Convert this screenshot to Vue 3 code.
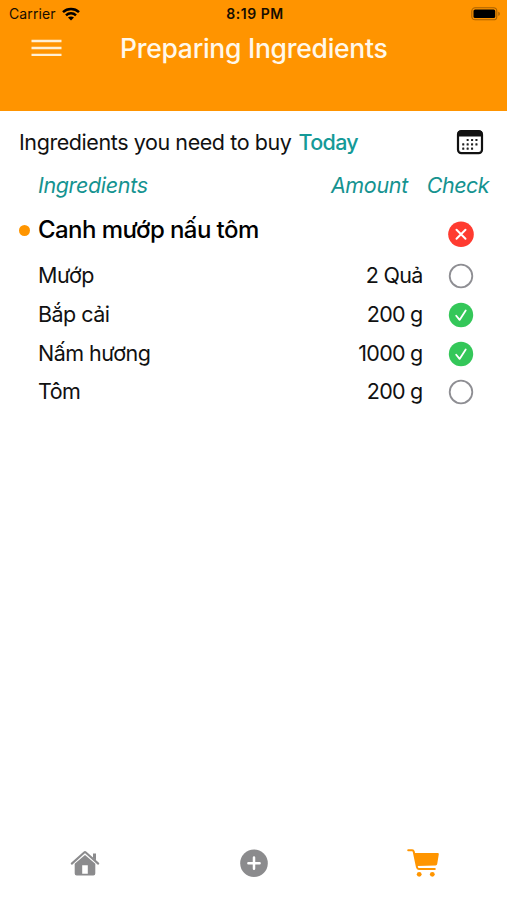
<script setup>
const ingredients = [
  { name: 'Mướp', amount: '2 Quả', checked: false },
  { name: 'Bắp cải', amount: '200 g', checked: true },
  { name: 'Nấm hương', amount: '1000 g', checked: true },
  { name: 'Tôm', amount: '200 g', checked: false },
]
const calendarDots = [
  [11.4, 11], [15.8, 11], [20.2, 11],
  [7, 15.3], [11.4, 15.3], [15.8, 15.3], [20.2, 15.3],
  [7, 19.6], [11.4, 19.6], [15.8, 19.6],
]
</script>

<template>
  <div class="screen">
    <header class="header">
      <div class="status">
        <div class="carrier">
          <span class="carrier-name">Carrier</span>
          <svg class="wifi" width="18" height="14" viewBox="0 0 18 14">
            <g fill="none" stroke="#000" stroke-width="2.5">
              <path d="M1 5.1C5.4.9 12.6.9 17 5.1" />
              <path d="M4 8.3c2.8-2.6 7.2-2.6 10 0" />
            </g>
            <path d="M9 13.4 6 10.5c1.7-1.5 4.3-1.5 6 0z" />
          </svg>
        </div>
        <span class="time">8:19 PM</span>
        <svg class="battery" width="30" height="14" viewBox="0 0 30 14">
          <rect x=".8" y=".8" width="25" height="12" rx="3.4" fill="none" stroke="#a96203" stroke-width="1.1" />
          <rect x="2.5" y="2.5" width="21.7" height="8.6" rx="1.6" />
          <path d="M27.3 4.8c2 .6 2 3.6 0 4.2z" fill="#a96203" />
        </svg>
      </div>
      <div class="navbar">
        <svg class="menu" width="31" height="18" viewBox="0 0 31 18">
          <path d="M.5 2h30M.5 9h30M.5 15.8h30" stroke="#fff0d5" stroke-width="2.3" />
        </svg>
        <h1 class="title">Preparing Ingredients</h1>
      </div>
    </header>

    <main class="content">
      <div class="intro">
        <p class="prompt">Ingredients you need to buy</p>
        <span class="today">Today</span>
        <svg class="calendar" width="28" height="26" viewBox="0 0 28 26">
          <rect x="2" y="2" width="24" height="22.2" rx="3.4" fill="#fff" stroke="#111" stroke-width="2.2" />
          <path d="M1.5 7.5V4.3Q1.5 1.5 4.7 1.5h18.6q3.2 0 3.2 2.8v3.2z" fill="#111" />
          <rect v-for="([x, y], i) in calendarDots" :key="i" :x="x - .8" :y="y - 1" width="2.1" height="2.1" rx=".5" fill="#222" />
        </svg>
      </div>

      <div class="columns">
        <span class="col-name">Ingredients</span>
        <span class="col-amount">Amount</span>
        <span class="col-check">Check</span>
      </div>

      <div class="dish">
        <i class="bullet"></i>
        <h2 class="dish-name">Canh mướp nấu tôm</h2>
        <svg class="remove" width="26" height="26" viewBox="0 0 26 26">
          <circle cx="13" cy="13.3" r="12.8" fill="#ff3b30" />
          <path d="m8.5 8.8 9 9m0-9-9 9" stroke="#fff" stroke-width="2" stroke-linecap="round" />
        </svg>
      </div>

      <ul class="list">
        <li v-for="item in ingredients" :key="item.name" class="row">
          <span class="name">{{ item.name }}</span>
          <span class="amount">{{ item.amount }}</span>
          <svg class="check" width="26" height="26" viewBox="0 0 26 26">
            <template v-if="item.checked">
              <circle cx="13" cy="13" r="12.2" fill="#34c759" />
              <path d="m8.2 13.7 3.4 4.2 6.1-9.4" fill="none" stroke="#fff" stroke-width="1.8" stroke-linecap="round" stroke-linejoin="round" />
            </template>
            <circle v-else cx="13" cy="13" r="11.3" fill="none" stroke="#8e8e93" stroke-width="1.8" />
          </svg>
        </li>
      </ul>
    </main>

    <nav class="tabs">
      <div class="tab">
        <svg width="30" height="28" viewBox="0 0 30 28">
          <path d="M1.8 14.6 14.2 3.5q.8-.7 1.6 0l12.4 11.1" fill="none" stroke="#8b8b8d" stroke-width="2.1" stroke-linecap="round" stroke-linejoin="round" />
          <path d="M23 4.5h3v7l-3-2.7z" fill="#8b8b8d" />
          <path fill="#8b8b8d" fill-rule="evenodd" d="M4.7 14.8 15 5.9l10.3 8.9v9.8q0 2-2 2H6.7q-2 0-2-2zM12.2 16.2v8.6h5.6v-8.6z" />
        </svg>
      </div>
      <div class="tab">
        <svg width="30" height="28" viewBox="0 0 30 28">
          <circle cx="15" cy="14.2" r="13.8" fill="#8b8b8d" />
          <path d="M15 8.6v11.2M9.4 14.2h11.2" stroke="#fff" stroke-width="2.5" stroke-linecap="round" />
        </svg>
      </div>
      <div class="tab">
        <svg width="32" height="28" viewBox="0 0 32 28">
          <path d="M1.2 1.3h4q1.2 0 1.5 1.2L10 18.2q.3 1.7 1.8 1.7h16" fill="none" stroke="#ff9500" stroke-width="2" stroke-linecap="round" stroke-linejoin="round" />
          <path d="M7.2 4h23.5q1.3 0 1.1 1.3l-1.6 9.6q-.2 1.4-1.6 1.6L9.8 17z" fill="#ff9500" />
          <circle cx="12.2" cy="25.3" r="2.4" fill="#ff9500" />
          <circle cx="25.3" cy="25.3" r="2.4" fill="#ff9500" />
        </svg>
      </div>
    </nav>
  </div>
</template>

<style>
body { margin: 0; background: #fff; }
</style>

<style scoped>
.screen {
  display: flex;
  flex-direction: column;
  width: 507px;
  height: 900px;
  background: #fff;
  color: #111;
  font-family: Inter, "Liberation Sans", sans-serif;
  font-size: 21.5px;
  line-height: 28px;
  white-space: nowrap;
}
h1, h2, p, ul { margin: 0; padding: 0; }
svg { display: block; flex: none; overflow: visible; }
.header { height: 110.5px; flex: none; background: #ff9400; }
.status {
  display: grid;
  grid-template-columns: 1fr auto 1fr;
  align-items: center;
  height: 27px;
  padding: 0 6px 0 9px;
  font-size: 14px;
  line-height: 27px;
  color: #150d00;
}
.carrier { display: flex; align-items: center; gap: 6px; }
.carrier-name { letter-spacing: .1px; }
.time { font-weight: 600; letter-spacing: .5px; }
.battery { justify-self: end; }
.navbar { display: flex; align-items: center; height: 42px; padding-left: 31px; }
.menu { margin-right: 58px; }
.title { padding-bottom: 1px; font-size: 26.5px; line-height: 40px; font-weight: 500; letter-spacing: -.27px; color: #fff8ea; }
.content { flex: 1; padding: 17.5px 18px 0 19px; }
.intro { display: flex; align-items: center; height: 28px; }
.prompt { letter-spacing: -.42px; }
.today { margin-left: 7px; font-weight: 500; letter-spacing: -.65px; color: #159a98; }
.calendar { margin-left: auto; margin-right: 5px; }
.columns {
  display: flex;
  height: 28px;
  margin-top: 15px;
  padding-left: 19px;
  font-style: italic;
  letter-spacing: -.35px;
  color: #159390;
}
.col-amount { margin-left: auto; }
.col-check { margin-left: 19px; letter-spacing: -.55px; }
.dish { display: flex; align-items: center; height: 36px; margin-top: 13px; }
.bullet { width: 11px; height: 11px; margin-right: 8px; border-radius: 50%; background: #ff9500; }
.dish-name { font-size: 24px; font-weight: 500; letter-spacing: -.57px; line-height: 36px; color: #000; }
.remove { margin-left: auto; margin-right: 15px; margin-top: 8px; }
.list { margin-top: 9px; list-style: none; }
.row { display: flex; align-items: center; height: 38.7px; padding: 0 15px 0 19px; }
.name { padding-bottom: 2px; letter-spacing: -.53px; }
.amount { margin-left: auto; margin-right: 25.5px; padding-bottom: 2px; letter-spacing: -.75px; }
.tabs { display: grid; grid-template-columns: repeat(3, 1fr); height: 75px; flex: none; }
.tab { display: flex; justify-content: center; align-items: center; }
</style>
